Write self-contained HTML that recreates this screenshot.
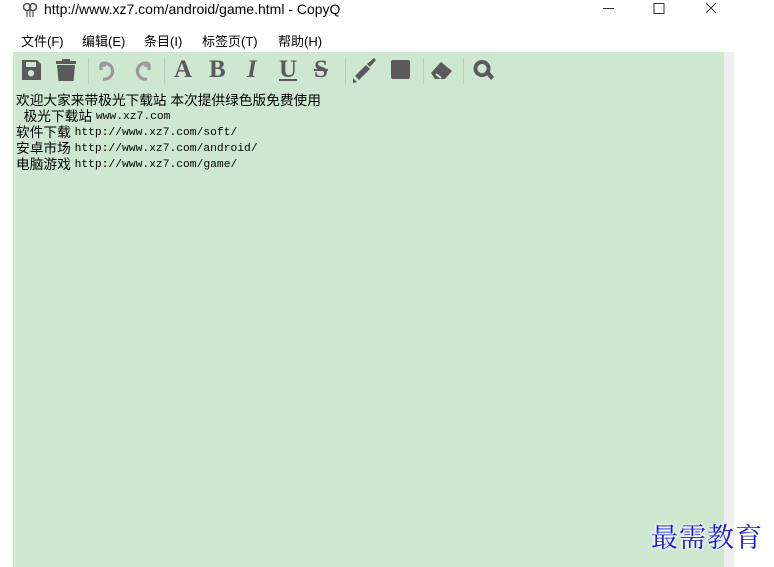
<!DOCTYPE html>
<html><head><meta charset="utf-8"><style>
body{margin:0;width:774px;height:567px;background:#fff;position:relative;overflow:hidden;font-family:"Liberation Sans","Noto Sans CJK SC",sans-serif}
.t{position:absolute;left:44px;top:1px;font-size:14px;color:#000}
.m{position:absolute;top:31px;font-size:13px;color:#000}
.g{position:absolute;left:13px;top:52px;width:711px;height:515px;background:#cde7d0}
.sb{position:absolute;left:724px;top:52px;width:10px;height:515px;background:#efefef}
.ic{position:absolute;top:56px;color:#5a5a5a;font-size:25px;font-weight:bold;font-family:"Liberation Serif",serif;line-height:28px}
.sep{position:absolute;top:58px;width:1px;height:26px;background:#b8d0bb}
.txt{position:absolute;left:16px;top:93px;font-size:13.7px;color:#000;font-family:"Liberation Sans","Noto Sans CJK SC",sans-serif;white-space:pre}
.txt div{height:16px;line-height:16px}
.txt .c{font-family:"Liberation Mono",monospace;font-size:11.3px;vertical-align:top}
.wm{position:absolute;left:651px;top:516px;font-size:27px;color:#1a1ad8;font-family:"Noto Serif CJK SC",serif;text-shadow:0 0 3px #fff,0 0 3px #fff,0 0 3px #fff;letter-spacing:1px}
</style></head><body>
<svg style="position:absolute;left:22px;top:2px" width="16" height="16" viewBox="0 0 16 16"><circle cx="5" cy="5" r="3.5" fill="none" stroke="#555" stroke-width="1.6"/><circle cx="11" cy="5" r="3.5" fill="none" stroke="#555" stroke-width="1.6"/><path d="M5 9v6M11 9v6M8 8v7" stroke="#777" stroke-width="1.5"/></svg>
<div class="t">http://www.xz7.com/android/game.html - CopyQ</div>
<svg style="position:absolute;left:600px;top:0" width="130" height="20"><path d="M3 8.5h11" stroke="#333"/><path d="M54 3.5h10v10h-10z" fill="none" stroke="#333"/><path d="M106 3l10 10M116 3l-10 10" stroke="#333"/></svg>
<div class="m" style="left:21px">文件(F)</div>
<div class="m" style="left:82px">编辑(E)</div>
<div class="m" style="left:144px">条目(I)</div>
<div class="m" style="left:202px">标签页(T)</div>
<div class="m" style="left:278px">帮助(H)</div>
<div class="g"></div><div class="sb"></div>
<svg style="position:absolute;left:0;top:0" width="520" height="90">
<g fill="#5a5a5a">
<path d="M22 60h15l4 4v16H22z M26 62v5h10v-5z M31 70a3.2 3.2 0 1 0 0.01 0z" fill-rule="evenodd"/>
<path d="M62 59h8v2h6v3H56v-3h6z M57 65h18l-1.5 16h-15z"/>
</g>
<g fill="none" stroke="#9a9a9a" stroke-width="3.2">
<path d="M101 64a8 8 0 1 1 2 15M101 64v6M100 65h6" />
<path d="M149 64a8 8 0 1 0 -2 15M149 64v6M150 65h-6"/>
</g>
<g fill="#5a5a5a">
<path d="M355 76l11-11 4 4-11 11z M367 64l7-6 2 2-6 7z M353 78l4 4-4 1z"/>
<rect x="391" y="60" width="19" height="19" rx="2"/>
<path d="M431 73l10-11 11 9-7 8h-10z"/>
<path d="M436 74l5 4" stroke="#cde7d0" stroke-width="2"/>
<path d="M482 60a8.5 8.5 0 1 1-0.01 0z M482 64a4.6 4.6 0 1 0 0.01 0z" fill-rule="evenodd"/>
<path d="M486 74l3-3 5 6-3 3z"/>
</g>
</svg>
<div class="sep" style="left:88px"></div><div class="sep" style="left:164px"></div><div class="sep" style="left:345px"></div><div class="sep" style="left:423px"></div><div class="sep" style="left:463px"></div>
<div class="ic" style="left:174px">A</div>
<div class="ic" style="left:209px">B</div>
<div class="ic" style="left:247px;font-style:italic">I</div>
<div class="ic" style="left:279px;text-decoration:underline">U</div>
<div class="ic" style="left:314px;text-decoration:line-through">S</div>
<div class="txt"><div>欢迎大家来带极光下载站 本次提供绿色版免费使用</div><div>  极光下载站 <span class="c">www.xz7.com</span></div><div>软件下载 <span class="c">http://www.xz7.com/soft/</span></div><div>安卓市场 <span class="c">http://www.xz7.com/android/</span></div><div>电脑游戏 <span class="c">http://www.xz7.com/game/</span></div></div>
<div class="wm">最需教育</div>
</body></html>
